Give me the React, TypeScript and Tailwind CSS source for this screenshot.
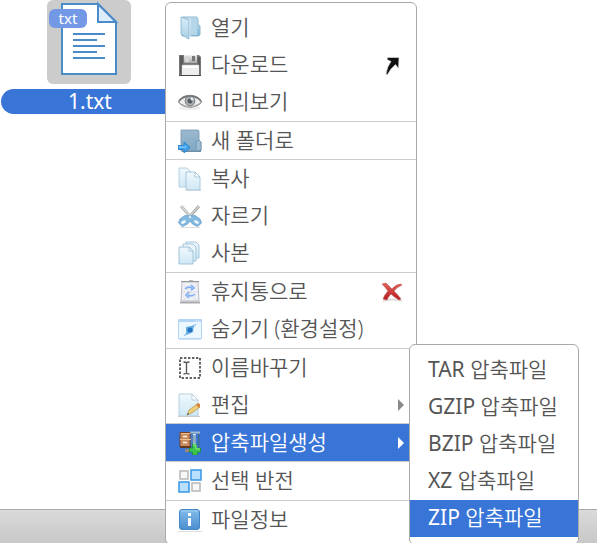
import type { ReactNode } from "react";

type IconName =
  | "open" | "save" | "eye" | "newFolder" | "copy" | "cut" | "duplicate"
  | "trash" | "hide" | "rename" | "edit" | "archive" | "invert" | "info";

const drawings: Record<IconName, ReactNode> = {
  open: (
    <>
      <path d="M4 1h15l1 2v5l2 2v9l-2 1H4z" fill="url(#folder)" stroke="#8fb9d3" />
      <path d="M13 2h6v17h-6z" fill="#b5d6e9" />
      <path d="M3 1l8 3v19l-2-1-6-4z" fill="url(#flap)" stroke="#84b1cd" strokeWidth=".8" />
      <path d="M11.500 4v18l1-1V3z" fill="#e9f5fb" />
    </>
  ),
  save: (
    <>
      <path d="M1 2h20l2 2v18H1z" fill="#777" />
      <path d="M2 3h3v18H2zM20 4h2v17h-2z" fill="#5c5c5c" />
      <path d="M6 2h13v8H6z" fill="url(#metal)" />
      <path d="M14 3h3v5h-3z" fill="#777" />
      <path d="M7 3h4v6H7z" fill="#d7d7d7" />
      <path d="M4 12h17v10H4z" fill="#fff" stroke="#bbb" strokeWidth=".5" />
      <path d="M5 15h15v6H5z" fill="#eee" />
      <path d="M1 22.500h22" stroke="#444" />
    </>
  ),
  eye: (
    <>
      <ellipse cx="12" cy="18" rx="11" ry="2" fill="#eee" />
      <path d="M.5 12C5 3 19 3 23.500 12C18 19 6 19 .5 12z" fill="#eee" stroke="#858585" strokeWidth="1.100" />
      <path d="M1 11C6 4.500 18 4.500 23 11" fill="none" stroke="#707070" strokeWidth="1.500" />
      <circle cx="12" cy="11" r="4.800" fill="#aeb2b5" stroke="#74797c" />
      <circle cx="12" cy="11" r="2.500" fill="#555b5f" />
      <circle cx="14" cy="9" r="1.500" fill="#e7edf0" />
      <path d="M3 14q9 5 18 0" fill="none" stroke="#aaa" />
    </>
  ),
  newFolder: (
    <>
      <path d="M3 1h17l1 1v9l2 2v9H3z" fill="url(#steel)" stroke="#7695ab" strokeWidth=".8" />
      <path d="M18 22v-9l3-2 2 2v8z" fill="#9bbdd2" stroke="#6f91a9" strokeWidth=".8" />
      <path d="M4 22.500h19" stroke="#718fa5" />
      <path d="M0 16.500h6V13l6 5.500L6 24v-3.500H0z" fill="#43a5ee" stroke="#1979c8" strokeWidth=".8" />
      <path d="M1 18h7" stroke="#98d5ff" />
    </>
  ),
  copy: (
    <>
      <path d="M1 1h8l5 5v14H1z" fill="url(#paper)" stroke="#a8c7db" strokeWidth=".8" />
      <path d="M8 5h9l5 5v13H8z" fill="url(#paper)" stroke="#9bbdd3" strokeWidth=".8" />
      <path d="M17 5v5h5z" fill="#fff" stroke="#9bbdd3" strokeWidth=".8" />
      <path d="M8 23.500h15" stroke="#ccd4da" />
    </>
  ),
  cut: (
    <>
      <path d="M3 2L17 18" stroke="#bcbdbd" strokeWidth="3" />
      <path d="M21 2L7 18" stroke="#a8aaab" strokeWidth="3" />
      <path d="M3 2L15 15M21 2L9 15" stroke="#e6e6e6" />
      <path d="M12 12l5-.5 5 3.500 1.500 4-4 3.500-5-2.500-2.500-3-2.500 3-5 2.500-4-3.500 1.500-4 5-3.500z" fill="#85bae0" stroke="#5e9dcc" strokeWidth=".8" />
      <ellipse cx="5.500" cy="18" rx="2.600" ry="1.300" fill="#f7fcff" transform="rotate(-30 5.500 18)" />
      <ellipse cx="18.500" cy="18" rx="2.600" ry="1.300" fill="#f7fcff" transform="rotate(30 18.500 18)" />
      <circle cx="12" cy="13" r="1.200" fill="#dff0fb" />
      <path d="M2 23.500h20" stroke="#ddd" />
    </>
  ),
  duplicate: (
    <g fill="url(#paper)" stroke="#8fb8cf" strokeWidth=".8">
      <path d="M8 1h10l3 3v13H8z" />
      <path d="M5 3h10l3 3v14H5z" />
      <path d="M1 6h10l4 4v13H1z" />
      <path d="M11 6v4h4z" fill="#fff" />
    </g>
  ),
  trash: (
    <>
      <path d="M2 22.500h20" stroke="#aaa" strokeWidth="2" />
      <path d="M4 2h16l1 19H3z" fill="#eef0f5" stroke="#b8bbc0" />
      <path d="M3 1.500h18M11 .8h4" stroke="#999" />
      <path d="M6 5l12 15M18 5L6 20M4 12h16" stroke="#d5dae7" strokeWidth=".6" />
      <path d="M7 9q3-3 7-1M13 5l3 3-3 2M17 14q-3 3-7 1M11 12l-3 3 3 3" fill="none" stroke="#82b0f1" strokeWidth="1.700" />
    </>
  ),
  hide: (
    <>
      <path d="M.5 2.500h23v19H.5z" fill="#edf7ff" stroke="#b4d4f4" />
      <path d="M1 3h22v2H1z" fill="#b3d6f8" />
      <path d="M18 4h1M20.500 4h1" stroke="#fff" />
      <path d="M6 19L18 7" stroke="#a0cbef" strokeWidth="1.500" />
      <path d="M8 10l5-1 3-1-1 7-4 2-3 1z" fill="#6aafe6" />
      <circle cx="12" cy="13" r="2.500" fill="#2375c2" />
      <path d="M1 22.500h22" stroke="#cfe4f8" />
    </>
  ),
  rename: (
    <>
      <path d="M2 2h20v20H2z" fill="none" stroke="#303030" strokeWidth="1.500" strokeDasharray="2.400 1.600" />
      <path d="M5.500 6q2.500 0 3 1 .5-1 3-1M8.500 7v10M5.500 18q2.500 0 3-1 .5 1 3 1" fill="none" stroke="#555" strokeWidth="1.300" />
    </>
  ),
  edit: (
    <>
      <path d="M1 1h13l6 6v16H1z" fill="url(#paper)" stroke="#a9c7da" strokeWidth=".8" />
      <path d="M14 1v6h6z" fill="#fff" stroke="#a9c7da" strokeWidth=".8" />
      <path d="M0 23.500h22" stroke="#ccc" />
      <path d="M9 22l2-5 8-6 3 3-8 6z" fill="#efcb71" stroke="#a8986d" strokeWidth=".7" />
      <path d="M18 12l2-2 2 1v3l-1 1z" fill="#d9873d" />
      <path d="M9 22l1-2 1 1z" fill="#333" />
    </>
  ),
  archive: (
    <>
      <path d="M12 1.500h10" stroke="#a9bccd" strokeWidth="2" />
      <path d="M13 3h5v11h-5z" fill="#4f7dbd" />
      <path d="M15 3h3v12h-3z" fill="#d9e6f0" />
      <path d="M15 5h3M15 7h3M15 9h3M15 11h3" stroke="#416e9c" />
      <path d="M20 3h1.500v14H20z" fill="#456a8d" />
      <path d="M7 18h8v3H7z" fill="#9a8878" />
      <path d="M2 1.500h10v14H2z" fill="#c98c60" stroke="#764327" />
      <path d="M2 8.500h11M3 2.500h9" stroke="#f1bd87" />
      <path d="M5 5.500h4M5 11.500h4" stroke="#fff1dd" strokeWidth="1.500" />
      <path d="M2 16h11" stroke="#623821" strokeWidth="2" />
      <path d="M14.500 13h4v4h4v4h-3v3h-5v-3h-3v-4h3z" fill="#3dc64b" stroke="#178d2b" strokeWidth=".7" />
      <path d="M15 14h3v4h4" fill="none" stroke="#91ee8f" />
    </>
  ),
  invert: (
    <>
      <path d="M13 1h10v10H13zM1 13h10v10H1z" fill="#b9e1ff" stroke="#3796e6" strokeWidth="1.500" />
      <path d="M2 2h8v8H2zM14 14h8v8h-8z" fill="#f7f7f7" stroke="#b8b8b8" strokeWidth="1.500" />
    </>
  ),
  info: (
    <>
      <path d="M0 23.500h24" stroke="#ddd" />
      <rect x="1.500" y="1.500" width="20" height="20" rx="2.500" fill="url(#info)" stroke="#4386c6" />
      <path d="M3 3h17" stroke="#a4d0f2" />
      <path d="M10 5h3v3h-3zM10 10h3v8h-3z" fill="#fff" />
    </>
  ),
};

function Gradients() {
  const stops: [string, string, string][] = [
    ["folder", "#c9e2f0", "#7eb7d7"],
    ["flap", "#d8edf7", "#a8cfe4"],
    ["metal", "#eeeeee", "#a8a8a8"],
    ["steel", "#9bb9ce", "#7fa8c6"],
    ["paper", "#f0f8fd", "#d0e8f5"],
    ["info", "#82bbea", "#4b8ed0"],
    ["cross", "#e2655c", "#b71920"],
  ];
  return (
    <svg className="absolute size-0" aria-hidden="true">
      <defs>
        {stops.map(([id, from, to]) => (
          <linearGradient key={id} id={id} x2="0" y2="1">
            <stop stopColor={from} />
            <stop offset="1" stopColor={to} />
          </linearGradient>
        ))}
      </defs>
    </svg>
  );
}

type Item = { icon: IconName; label: string; extra?: "shortcut" | "remove" | "submenu"; active?: boolean };

const groups: { roomy?: boolean; items: Item[] }[] = [
  {
    roomy: true,
    items: [
      { icon: "open", label: "열기" },
      { icon: "save", label: "다운로드", extra: "shortcut" },
      { icon: "eye", label: "미리보기" },
    ],
  },
  { items: [{ icon: "newFolder", label: "새 폴더로" }] },
  {
    roomy: true,
    items: [
      { icon: "copy", label: "복사" },
      { icon: "cut", label: "자르기" },
      { icon: "duplicate", label: "사본" },
    ],
  },
  {
    roomy: true,
    items: [
      { icon: "trash", label: "휴지통으로", extra: "remove" },
      { icon: "hide", label: "숨기기 (환경설정)" },
    ],
  },
  {
    items: [
      { icon: "rename", label: "이름바꾸기" },
      { icon: "edit", label: "편집", extra: "submenu" },
    ],
  },
  { items: [{ icon: "archive", label: "압축파일생성", extra: "submenu", active: true }] },
  { roomy: true, items: [{ icon: "invert", label: "선택 반전" }] },
  { items: [{ icon: "info", label: "파일정보" }] },
];

const formats = ["TAR", "GZIP", "BZIP", "XZ", "ZIP"];

function Extra({ kind, active }: { kind: Item["extra"]; active?: boolean }) {
  if (kind === "shortcut")
    return (
      <svg viewBox="0 0 24 24" className="mr-3 size-6" aria-hidden="true">
        <path d="M7.500 4.500h11.500l-.500 11-3-4q-5 4-8 10H6q1-8 5-13l-4-2z" fill="#111" stroke="#dfe5e5" strokeWidth=".6" />
      </svg>
    );
  if (kind === "remove")
    return (
      <svg viewBox="0 0 24 24" className="mr-3 size-6" aria-hidden="true">
        <path d="M3 21q10-3 19 0" stroke="#ddd" strokeWidth="2" fill="none" />
        <path d="M2 4l4-1 6 6q4-5 9-5l1 1q-5 2-8 6 4 4 7 8l-2 1q-5-3-8-6-3 3-4 6l-4-1q2-5 5-8-3-4-6-7z" fill="url(#cross)" stroke="#bd5b57" strokeWidth=".6" />
      </svg>
    );
  if (kind === "submenu")
    return (
      <svg viewBox="0 0 8 12" className="mr-[11px] h-3 w-2" aria-hidden="true">
        <path d="M1 0l6 6-6 6z" fill={active ? "#fff" : "#888"} />
      </svg>
    );
  return null;
}

function MenuRow({ item }: { item: Item }) {
  return (
    <button
      type="button"
      role="menuitem"
      className={
        "flex h-[37px] w-full items-center gap-[9px] whitespace-nowrap pl-3 text-left " +
        (item.active ? "bg-[#3875d7] text-white" : "text-[#555]")
      }
    >
      <svg viewBox="0 0 24 24" className="size-6 shrink-0" aria-hidden="true">
        {drawings[item.icon]}
      </svg>
      <span className="flex-1 pb-0.5">{item.label}</span>
      <Extra kind={item.extra} active={item.active} />
    </button>
  );
}

export default function App() {
  return (
    <div className="relative flex min-h-screen flex-col overflow-hidden bg-white font-['Noto_Sans','Noto_Sans_CJK_KR',sans-serif] text-[21px] font-[350] leading-6">
      <Gradients />
      <main className="flex-1">
        <figure className="flex w-[178px] flex-col items-center">
          <div className="relative flex h-[84px] w-[84px] justify-center rounded-md bg-[#ccc]">
            <svg viewBox="0 0 84 84" className="size-full" aria-hidden="true">
              <path d="M15 4h36l18 18v52H15z" fill="#fff" stroke="#4a8cc9" strokeWidth="2" />
              <path d="M51 4v18h18z" fill="#deedfc" stroke="#4a8cc9" strokeWidth="2" />
              <path d="M26 34h32M26 40h24M26 46h32M26 52h24M26 58h32" stroke="#4a8cc9" strokeWidth="2" />
            </svg>
            <span className="absolute left-[2px] top-[9px] flex h-[19px] w-[38px] items-center justify-center rounded-md bg-[#7399e6] pb-0.5 text-[15px] font-normal text-white">
              txt
            </span>
          </div>
          <figcaption className="ml-0.5 mt-[5px] flex h-[25px] w-full items-center justify-center rounded-full bg-[#3875d7] pb-0.5 font-normal text-white">
            1.txt
          </figcaption>
        </figure>
      </main>
      <footer className="h-[34px] border-t border-[#aaa] bg-linear-to-b from-[#dadada] to-[#c8c8c8]" />

      <div role="menu" className="absolute left-[165px] top-[2px] w-[252px] rounded-md border border-[#aaa] bg-white py-[6px]">
        {groups.map((group, index) => (
          <div
            key={group.items[0].label}
            role="group"
            className={(index > 0 ? "border-t border-[#ccc] " : "") + (group.roomy ? "pb-px" : "")}
          >
            {group.items.map((item) => (
              <MenuRow key={item.label} item={item} />
            ))}
          </div>
        ))}
      </div>

      <div role="menu" className="absolute left-[409px] top-[344px] w-[170px] rounded-md border border-[#aaa] bg-white py-[7px]">
        {formats.map((format) => (
          <button
            key={format}
            type="button"
            role="menuitem"
            className={
              "flex h-[37px] w-full items-center whitespace-pre pb-[3px] pl-[18px] " +
              (format === "ZIP" ? "bg-[#3875d7] text-white" : "text-[#555]")
            }
          >
            <span className="font-normal">{format} </span>
            <span>압축파일</span>
          </button>
        ))}
      </div>
    </div>
  );
}
